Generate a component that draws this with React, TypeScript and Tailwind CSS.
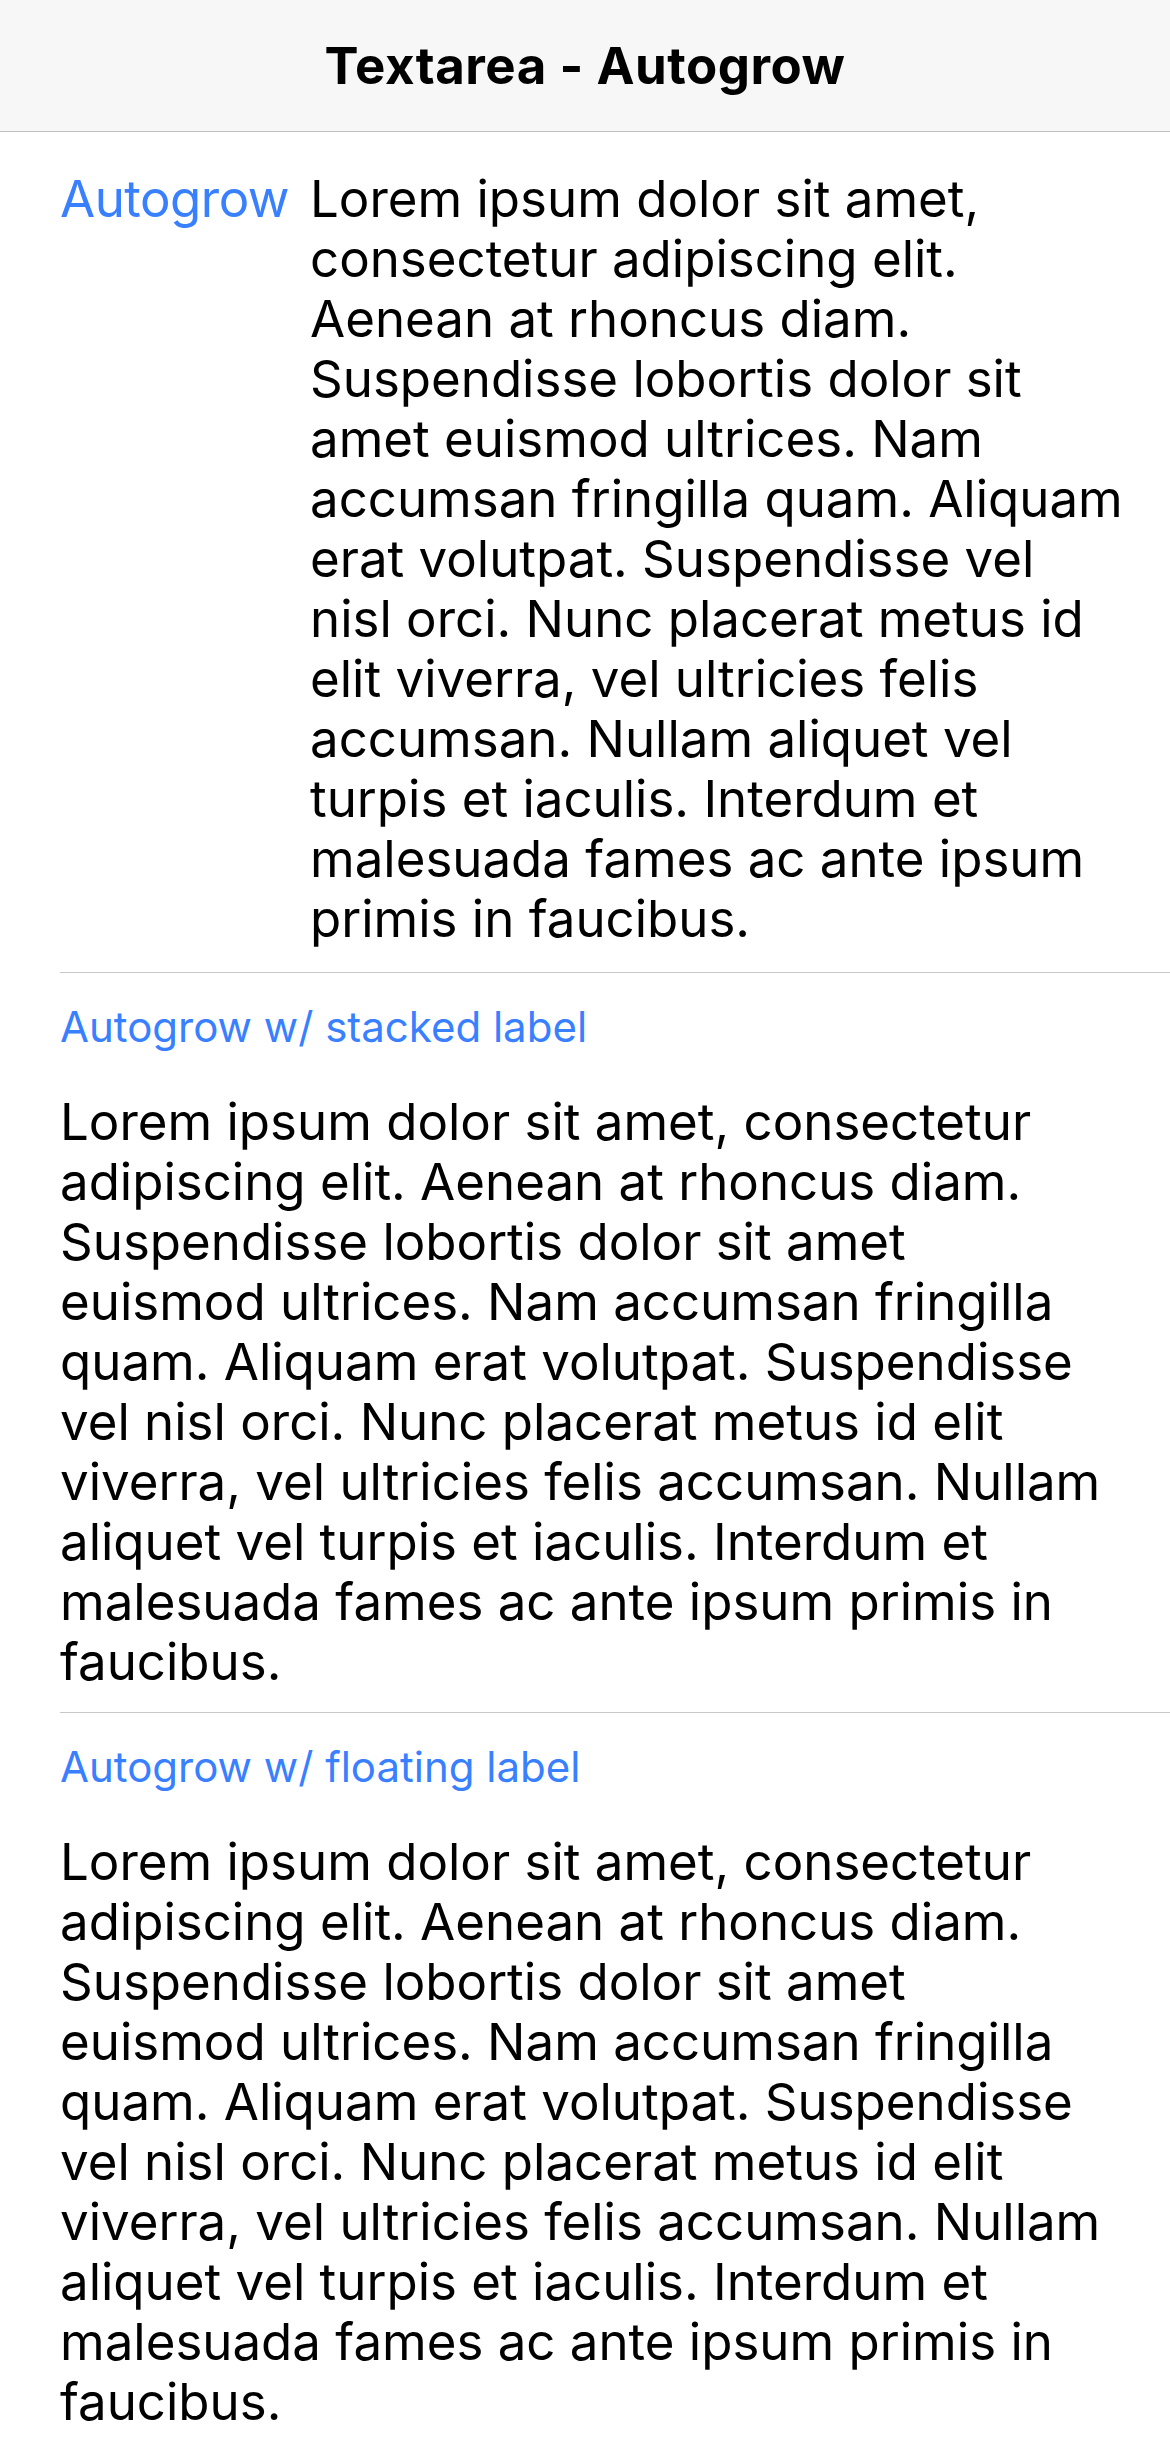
const LINES_A = [
  "Lorem ipsum dolor sit amet,",
  "consectetur adipiscing elit.",
  "Aenean at rhoncus diam.",
  "Suspendisse lobortis dolor sit",
  "amet euismod ultrices. Nam",
  "accumsan fringilla quam. Aliquam",
  "erat volutpat. Suspendisse vel",
  "nisl orci. Nunc placerat metus id",
  "elit viverra, vel ultricies felis",
  "accumsan. Nullam aliquet vel",
  "turpis et iaculis. Interdum et",
  "malesuada fames ac ante ipsum",
  "primis in faucibus.",
];

const LINES_B = [
  "Lorem ipsum dolor sit amet, consectetur",
  "adipiscing elit. Aenean at rhoncus diam.",
  "Suspendisse lobortis dolor sit amet",
  "euismod ultrices. Nam accumsan fringilla",
  "quam. Aliquam erat volutpat. Suspendisse",
  "vel nisl orci. Nunc placerat metus id elit",
  "viverra, vel ultricies felis accumsan. Nullam",
  "aliquet vel turpis et iaculis. Interdum et",
  "malesuada fames ac ante ipsum primis in",
  "faucibus.",
];

function TextLines({ lines }: { lines: string[] }) {
  return (
    <div className="text-[51px] leading-[60px] tracking-[0em] text-black whitespace-nowrap">
      {lines.map((l, i) => (
        <div key={i}>{l}</div>
      ))}
    </div>
  );
}

function StackedItem({ label }: { label: string }) {
  return (
    <div className="pl-[60px]">
      <div className="border-b border-[#c8c7cc] pt-[29px] pb-[20px]">
        <div className="text-[42px] leading-[50px] tracking-[0em] text-[#3880ff]">{label}</div>
        <div className="mt-[40px]">
          <TextLines lines={LINES_B} />
        </div>
      </div>
    </div>
  );
}

export default function App() {
  return (
    <div className="w-[1170px] min-h-[2451px] bg-white" style={{ fontFamily: "Inter, 'Noto Sans', sans-serif" }}>
      <header className="h-[132px] bg-[#f7f7f7] border-b border-[#c1c1c1] flex justify-center">
        <h1 className="text-[51px] leading-[131px] font-bold tracking-[0.01em] text-black">Textarea - Autogrow</h1>
      </header>

      {/* fixed label */}
      <div className="pl-[60px]">
        <div className="border-b border-[#c8c7cc] pt-[37px] pb-[23px] flex">
          <div className="w-[250px] shrink-0 text-[51px] leading-[60px] tracking-[-0.01em] text-[#3880ff]">Autogrow</div>
          <TextLines lines={LINES_A} />
        </div>
      </div>

      <StackedItem label="Autogrow w/ stacked label" />
      <StackedItem label="Autogrow w/ floating label" />
    </div>
  );
}
